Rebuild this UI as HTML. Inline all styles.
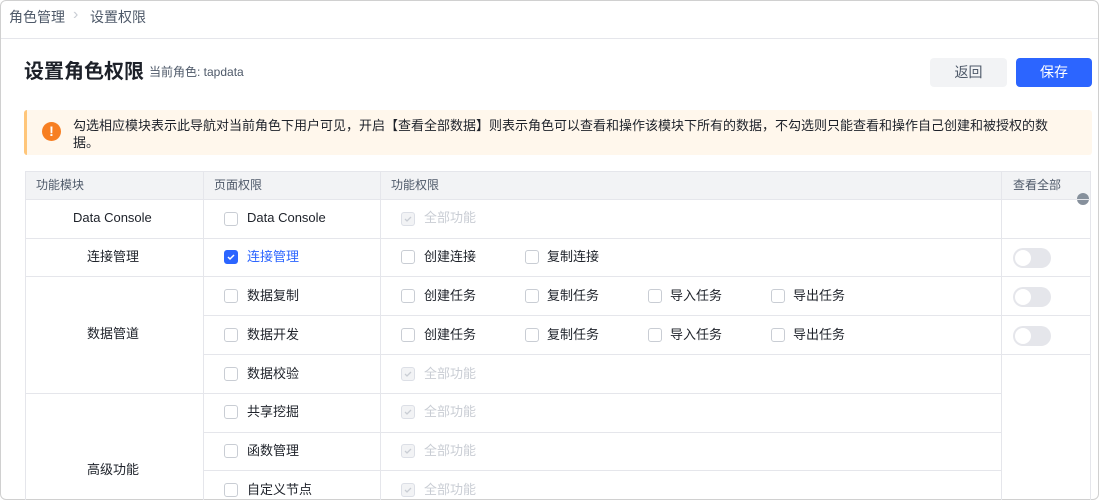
<!DOCTYPE html>
<html><head><meta charset="utf-8"><style>
*{box-sizing:border-box;margin:0;padding:0}
body{width:1099px;height:500px;overflow:hidden;background:#fff;font-family:"Liberation Sans","Noto Sans CJK SC",sans-serif;color:#1d2129;position:relative}
.a{position:absolute}
.frame{left:0;top:0;width:1099px;height:500px;border:1px solid #d0d0d0;border-radius:6px}
.t{font-size:13px;white-space:nowrap;line-height:14px}
.cb{position:absolute;width:14px;height:14px;border:1px solid #c9cdd4;border-radius:3px;background:#fff}
.cb.on{background:#2c65ff;border-color:#2c65ff}
.cb.dis{background:#f2f3f5;border-color:#dcdfe6}
.cb svg{position:absolute;left:0px;top:0px}
.hl{position:absolute;height:1px;background:#e5e6eb}
.vl{position:absolute;width:1px;background:#e5e6eb}
.tg{position:absolute;width:38px;height:20px;border-radius:10px;background:#e5e6eb}
.tg::after{content:"";position:absolute;left:2px;top:2px;width:16px;height:16px;border-radius:50%;background:#fff}
</style></head><body>
<div class="a frame"></div>
<div class="a t" style="left:9px;top:9px;font-size:14px;color:#4e5969;line-height:16px">角色管理</div>
<div class="a t" style="left:73px;top:7px;font-size:16px;color:#c9cdd4;line-height:16px">›</div>
<div class="a t" style="left:90px;top:9px;font-size:14px;color:#4e5969;line-height:16px">设置权限</div>
<div class="hl" style="left:1px;top:38px;width:1097px;background:#e5e6eb"></div>
<div class="a t" style="left:24px;top:61px;font-size:20px;font-weight:bold;color:#1d2129;line-height:22px">设置角色权限</div>
<div class="a t" style="left:149px;top:65px;font-size:12px;color:#4e5969">当前角色: tapdata</div>
<div class="a" style="left:930px;top:58px;width:77px;height:29px;background:#f2f3f5;border-radius:4px;font-size:14px;color:#4e5969;text-align:center;line-height:29px">返回</div>
<div class="a" style="left:1016px;top:58px;width:76px;height:29px;background:#2c65ff;border-radius:4px;font-size:14px;color:#fff;text-align:center;line-height:29px">保存</div>
<div class="a" style="left:24px;top:110px;width:1068px;height:45px;background:#fff7ec;border-left:3px solid #ffc67a;border-radius:3px"></div>
<div class="a" style="left:42px;top:122px;width:19px;height:19px;border-radius:50%;background:#f77f22;color:#fff;font-size:14px;font-weight:bold;text-align:center;line-height:19px">!</div>
<div class="a" style="left:73px;top:117px;width:1000px;font-size:13px;line-height:17px;color:#1d2129">勾选相应模块表示此导航对当前角色下用户可见，开启【查看全部数据】则表示角色可以查看和操作该模块下所有的数据，不勾选则只能查看和操作自己创建和被授权的数据。</div>
<!-- table -->
<div class="a" style="left:25px;top:171px;width:1066px;height:28px;background:#f2f3f5"></div>
<div class="a t" style="left:36px;top:178px;font-size:12px;color:#4e5969">功能模块</div>
<div class="a t" style="left:214px;top:178px;font-size:12px;color:#4e5969">页面权限</div>
<div class="a t" style="left:391px;top:178px;font-size:12px;color:#4e5969">功能权限</div>
<div class="a t" style="left:1013px;top:178px;font-size:12px;color:#4e5969">查看全部</div>
<div class="a" style="left:1077px;top:193px;width:12px;height:12px;border-radius:50%;background:#86909c"></div>
<div class="hl" style="left:25px;top:171px;width:1066px"></div>
<div class="hl" style="left:25px;top:199px;width:1066px"></div>
<div class="hl" style="left:25px;top:238px;width:1066px"></div>
<div class="hl" style="left:25px;top:276px;width:1066px"></div>
<div class="hl" style="left:203px;top:315px;width:888px"></div>
<div class="hl" style="left:203px;top:354px;width:888px"></div>
<div class="hl" style="left:25px;top:393px;width:976px"></div>
<div class="hl" style="left:203px;top:432px;width:798px"></div>
<div class="hl" style="left:203px;top:470px;width:798px"></div>
<div class="vl" style="left:25px;top:171px;height:329px"></div>
<div class="vl" style="left:203px;top:171px;height:329px"></div>
<div class="vl" style="left:380px;top:171px;height:329px"></div>
<div class="vl" style="left:1001px;top:171px;height:329px"></div>
<div class="vl" style="left:1090px;top:171px;height:329px"></div>
<div class="a t" style="left:73px;top:211px">Data Console</div>
<div class="a t" style="left:87px;top:250px">连接管理</div>
<div class="a t" style="left:87px;top:327px">数据管道</div>
<div class="a t" style="left:87px;top:463px">高级功能</div>
<!-- col2 -->
<div class="cb" style="left:224px;top:212px"></div><div class="a t" style="left:247px;top:211px">Data Console</div>
<div class="cb on" style="left:224px;top:250px"><svg width="12" height="12"><path d="M3 6l2 2 4-4" stroke="#fff" stroke-width="1.5" fill="none"/></svg></div><div class="a t" style="left:247px;top:250px;color:#2c65ff">连接管理</div>
<div class="cb" style="left:224px;top:289px"></div><div class="a t" style="left:247px;top:289px">数据复制</div>
<div class="cb" style="left:224px;top:328px"></div><div class="a t" style="left:247px;top:328px">数据开发</div>
<div class="cb" style="left:224px;top:367px"></div><div class="a t" style="left:247px;top:367px">数据校验</div>
<div class="cb" style="left:224px;top:405px"></div><div class="a t" style="left:247px;top:405px">共享挖掘</div>
<div class="cb" style="left:224px;top:444px"></div><div class="a t" style="left:247px;top:444px">函数管理</div>
<div class="cb" style="left:224px;top:483px"></div><div class="a t" style="left:247px;top:483px">自定义节点</div>
<!-- col3 -->
<div class="cb dis" style="left:401px;top:212px"><svg width="12" height="12"><path d="M3 6l2 2 4-4" stroke="#c9cdd4" stroke-width="1.3" fill="none"/></svg></div><div class="a t" style="left:424px;top:211px;color:#c9cdd4">全部功能</div>
<div class="cb" style="left:401px;top:250px"></div><div class="a t" style="left:424px;top:250px">创建连接</div>
<div class="cb" style="left:525px;top:250px"></div><div class="a t" style="left:547px;top:250px">复制连接</div>
<div class="cb" style="left:401px;top:289px"></div><div class="a t" style="left:424px;top:289px">创建任务</div>
<div class="cb" style="left:525px;top:289px"></div><div class="a t" style="left:547px;top:289px">复制任务</div>
<div class="cb" style="left:648px;top:289px"></div><div class="a t" style="left:670px;top:289px">导入任务</div>
<div class="cb" style="left:771px;top:289px"></div><div class="a t" style="left:793px;top:289px">导出任务</div>
<div class="cb" style="left:401px;top:328px"></div><div class="a t" style="left:424px;top:328px">创建任务</div>
<div class="cb" style="left:525px;top:328px"></div><div class="a t" style="left:547px;top:328px">复制任务</div>
<div class="cb" style="left:648px;top:328px"></div><div class="a t" style="left:670px;top:328px">导入任务</div>
<div class="cb" style="left:771px;top:328px"></div><div class="a t" style="left:793px;top:328px">导出任务</div>
<div class="cb dis" style="left:401px;top:367px"><svg width="12" height="12"><path d="M3 6l2 2 4-4" stroke="#c9cdd4" stroke-width="1.3" fill="none"/></svg></div><div class="a t" style="left:424px;top:367px;color:#c9cdd4">全部功能</div>
<div class="cb dis" style="left:401px;top:405px"><svg width="12" height="12"><path d="M3 6l2 2 4-4" stroke="#c9cdd4" stroke-width="1.3" fill="none"/></svg></div><div class="a t" style="left:424px;top:405px;color:#c9cdd4">全部功能</div>
<div class="cb dis" style="left:401px;top:444px"><svg width="12" height="12"><path d="M3 6l2 2 4-4" stroke="#c9cdd4" stroke-width="1.3" fill="none"/></svg></div><div class="a t" style="left:424px;top:444px;color:#c9cdd4">全部功能</div>
<div class="cb dis" style="left:401px;top:483px"><svg width="12" height="12"><path d="M3 6l2 2 4-4" stroke="#c9cdd4" stroke-width="1.3" fill="none"/></svg></div><div class="a t" style="left:424px;top:483px;color:#c9cdd4">全部功能</div>
<!-- toggles -->
<div class="tg" style="left:1013px;top:248px"></div>
<div class="tg" style="left:1013px;top:287px"></div>
<div class="tg" style="left:1013px;top:326px"></div>
</body></html>
